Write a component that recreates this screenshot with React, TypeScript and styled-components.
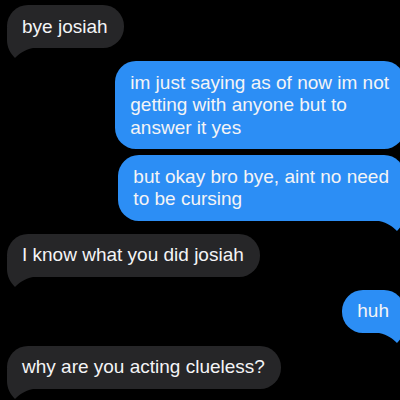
import styled, { createGlobalStyle } from 'styled-components';

const GlobalStyle = createGlobalStyle`
  html, body {
    margin: 0;
    padding: 0;
    background: #000;
    width: 400px;
    height: 400px;
    overflow: hidden;
  }
`;

const Thread = styled.div`
  display: flex;
  flex-direction: column;
  width: 400px;
  height: 400px;
  box-sizing: border-box;
  padding: 5px 0 0 7px;
  overflow: hidden;
  background: #000;
  font-family: 'Liberation Sans', Arial, sans-serif;
`;

/** One message row, left for them, right for me */
const Row = styled.div<{ $me?: boolean; $gap: number }>`
  display: flex;
  justify-content: ${({ $me }) => ($me ? 'flex-end' : 'flex-start')};
  margin-top: ${({ $gap }) => $gap}px;
  margin-right: ${({ $me }) => ($me ? '-5px' : '0')};
`;

const Bubble = styled.div<{ $me?: boolean }>`
  position: relative;
  background: ${({ $me }) => ($me ? '#2c8ef5' : '#262628')};
  color: #f4f4f6;
  font-size: 19px;
  line-height: 22.5px;
  padding: 10.5px 16px 10px 15px;
  border-radius: 21px;
  white-space: pre;
`;

const Text = styled.span`
  position: relative;
  z-index: 1;
`;

/** Little hook under the last bubble of a group */
const Tail = styled.svg<{ $me?: boolean }>`
  position: absolute;
  bottom: -10px;
  width: 26px;
  height: 30px;
  fill: ${({ $me }) => ($me ? '#2c8ef5' : '#262628')};
  ${({ $me }) => ($me ? 'right: 0; transform: scaleX(-1);' : 'left: 0;')}
`;

type Msg = { text: string; me?: boolean; tail?: boolean; gap: number };

const messages: Msg[] = [
  { text: 'bye josiah', tail: true, gap: 0 },
  { text: 'im just saying as of now im not\ngetting with anyone but to\nanswer it yes', me: true, gap: 13 },
  { text: 'but okay bro bye, aint no need\nto be cursing', me: true, tail: true, gap: 6 },
  { text: 'I know what you did josiah', tail: true, gap: 13 },
  { text: 'huh', me: true, tail: true, gap: 13 },
  { text: 'why are you acting clueless?', tail: true, gap: 13 },
];

export default function App() {
  return (
    <>
      <GlobalStyle />
      <Thread>
        {messages.map((m, i) => (
          <Row key={i} $me={m.me} $gap={m.gap}>
            <Bubble $me={m.me}>
              <Text>{m.text}</Text>
              {m.tail && (
                <Tail $me={m.me} viewBox="0 0 26 30">
                  <path d="M0 0 V12 C0 19 3 25 8 30 C12 26 17 22 26 20 V0 Z" />
                </Tail>
              )}
            </Bubble>
          </Row>
        ))}
      </Thread>
    </>
  );
}
